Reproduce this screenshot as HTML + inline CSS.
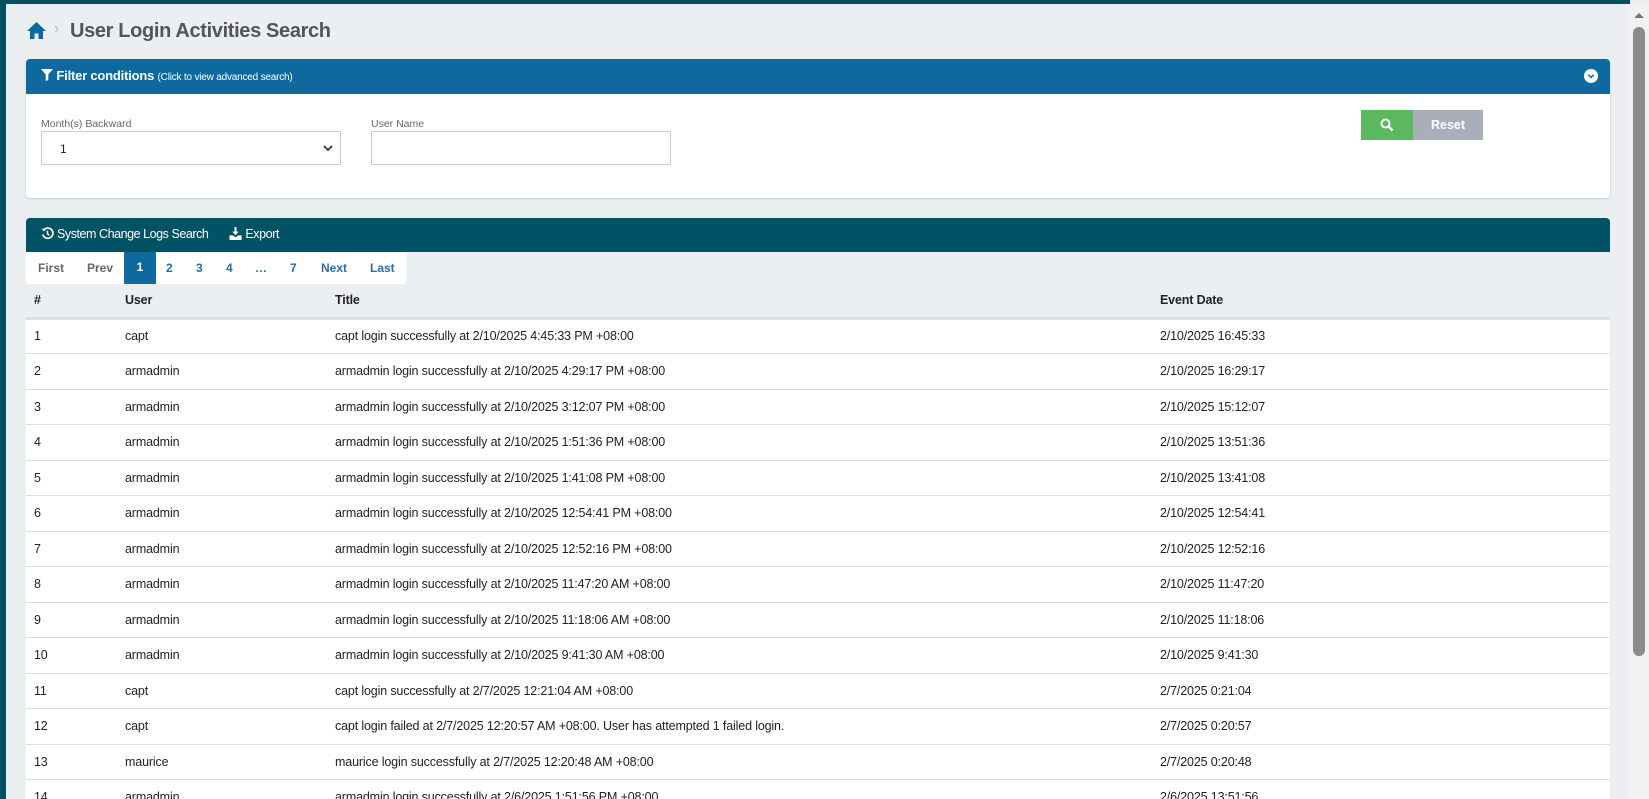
<!DOCTYPE html>
<html><head><meta charset="utf-8"><style>
*{box-sizing:border-box;margin:0;padding:0}
html,body{width:1649px;height:799px;overflow:hidden}
body{background:#eceff1;font-family:"Liberation Sans",sans-serif;font-size:12.5px;color:#222;position:relative}
.lb{position:absolute;left:0;top:0;width:6px;height:799px;background:#02505f}
.tb{position:absolute;left:0;top:0;width:1630px;height:4px;background:#02505f}
.sb{position:absolute;left:1630px;top:4px;width:19px;height:795px;background:#f1f1f1}
.thumb{position:absolute;left:1633px;top:27px;width:12px;height:629px;background:#8a8a8a;border-radius:6px}
.arr{position:absolute;left:1634px;top:13px;width:0;height:0;border-left:5px solid transparent;border-right:5px solid transparent;border-bottom:5px solid #777}
.title{position:absolute;left:70px;top:20px;font-size:20px;font-weight:bold;color:#555;letter-spacing:-0.35px}
.panel{position:absolute;left:26px;width:1584px;background:#fff;border-radius:4px;box-shadow:0 1px 2px rgba(0,0,0,.15)}
.fh{height:35px;background:#0e6a9e;border-radius:4px 4px 0 0;color:#fff;padding:9px 0 0 15px;font-weight:bold;font-size:13px;letter-spacing:-0.2px}
.fh small{font-weight:normal;font-size:10px}
.lbl{position:absolute;font-size:10.5px;color:#666;top:59px}
.inp{position:absolute;top:72px;height:34px;border:1px solid #ccc;background:#fff}
.dh{height:34px;background:#025266;border-radius:4px 4px 0 0;color:#fff;font-size:12.5px;padding:9px 0 0 15px;letter-spacing:-0.45px}
.pg{position:absolute;left:26px;top:252px;height:32px;width:380px;background:#fff;border-radius:0 0 4px 4px;font-weight:bold;font-size:12px}
.pg span{position:absolute;top:9px;color:#2a6fa8}
table{position:absolute;left:26px;top:284px;width:1584px;border-collapse:collapse;letter-spacing:-0.15px}
th{height:34px;text-align:left;font-size:12.5px;background:#eceff1;border-bottom:3px solid #dcdfe2}
td{height:35.5px;background:#fff;border-bottom:1px solid #ddd}
th,td{padding:0}
</style></head><body>
<div class="lb"></div><div class="tb"></div>
<div class="sb"></div><div class="arr"></div><div class="thumb"></div>
<svg style="position:absolute;left:26px;top:21px" width="21" height="19" viewBox="0 0 21 19"><path d="M10.5 1 L20 10 L17 10 L17 18 L12.5 18 L12.5 12.5 L8.5 12.5 L8.5 18 L4 18 L4 10 L1 10 Z" fill="#0e6a9e"/></svg>
<div style="position:absolute;left:54px;top:20px;color:#bbb;font-size:16px">›</div>
<div class="title">User Login Activities Search</div>

<div class="panel" style="top:59px;height:139px">
 <div class="fh"><svg width="12" height="12" viewBox="0 0 12 12" style="vertical-align:-1px"><path d="M0 0H12L7.3 5.5V11L4.7 12V5.5Z" fill="#fff"/></svg> Filter conditions <small>(Click to view advanced search)</small></div>
 <svg style="position:absolute;right:12px;top:10px" width="14" height="14" viewBox="0 0 14 14"><circle cx="7" cy="7" r="7" fill="#fff"/><path d="M4.3 5.8L7 8.4L9.7 5.8" stroke="#0e6a9e" stroke-width="1.5" fill="none"/></svg>
 <div class="lbl" style="left:15px">Month(s) Backward</div>
 <div class="inp" style="left:15px;width:300px"><span style="position:absolute;left:18px;top:10px;font-size:12px">1</span><svg style="position:absolute;right:7px;top:12px" width="10" height="8" viewBox="0 0 10 8"><path d="M1 2L5 6L9 2" stroke="#333" stroke-width="1.8" fill="none"/></svg></div>
 <div class="lbl" style="left:345px">User Name</div>
 <div class="inp" style="left:345px;width:300px"></div>
 <div style="position:absolute;left:1335px;top:51px;width:52px;height:30px;background:#5cb85c"><svg style="position:absolute;left:19px;top:8px" width="14" height="14" viewBox="0 0 14 14"><circle cx="5.5" cy="5.5" r="4" stroke="#fff" stroke-width="2" fill="none"/><path d="M8.5 8.5L12.5 12.5" stroke="#fff" stroke-width="2.4"/></svg></div>
 <div style="position:absolute;left:1387px;top:51px;width:70px;height:30px;background:#a8afb9;color:#fff;font-weight:bold;font-size:12.5px;text-align:center;line-height:30px">Reset</div>
</div>

<div class="panel" style="top:218px;height:34px;box-shadow:none">
 <div class="dh"><svg width="13" height="13" viewBox="0 0 14 14" style="vertical-align:-2px"><path d="M2.5 4A5.5 5.5 0 1 1 2 8" stroke="#fff" stroke-width="1.8" fill="none"/><path d="M0.5 1.5L3 4.5L6 2.5Z" fill="#fff"/><path d="M7 4V7.3L9 9" stroke="#fff" stroke-width="1.6" fill="none"/></svg> System Change Logs Search <span style="margin-left:18px"><svg width="13" height="13" viewBox="0 0 14 14" style="vertical-align:-2px"><path d="M7 0V7" stroke="#fff" stroke-width="2.2"/><path d="M3.5 5L7 8.7L10.5 5Z" fill="#fff"/><path d="M0.5 9H4L7 11L10 9H13.5V14H0.5Z" fill="#fff"/></svg> Export</span></div>
</div>
<div class="pg">
 <span style="left:12px;color:#666">First</span>
 <span style="left:61px;color:#666">Prev</span>
 <div style="position:absolute;left:98px;top:0;width:32px;height:32px;background:#0e6a9e;color:#fff;text-align:center;line-height:31px">1</div>
 <span style="left:140px">2</span><span style="left:170px">3</span><span style="left:200px">4</span><span style="left:229px">…</span><span style="left:264px">7</span><span style="left:295px">Next</span><span style="left:344px">Last</span>
</div>

<table>
<colgroup><col style="width:99px"><col style="width:210px"><col style="width:825px"><col></colgroup>
<tr><th style="padding-left:8px">#</th><th>User</th><th>Title</th><th>Event Date</th></tr>
<tr><td style="padding-left:8px">1</td><td>capt</td><td>capt login successfully at 2/10/2025 4:45:33 PM +08:00</td><td>2/10/2025 16:45:33</td></tr>
<tr><td style="padding-left:8px">2</td><td>armadmin</td><td>armadmin login successfully at 2/10/2025 4:29:17 PM +08:00</td><td>2/10/2025 16:29:17</td></tr>
<tr><td style="padding-left:8px">3</td><td>armadmin</td><td>armadmin login successfully at 2/10/2025 3:12:07 PM +08:00</td><td>2/10/2025 15:12:07</td></tr>
<tr><td style="padding-left:8px">4</td><td>armadmin</td><td>armadmin login successfully at 2/10/2025 1:51:36 PM +08:00</td><td>2/10/2025 13:51:36</td></tr>
<tr><td style="padding-left:8px">5</td><td>armadmin</td><td>armadmin login successfully at 2/10/2025 1:41:08 PM +08:00</td><td>2/10/2025 13:41:08</td></tr>
<tr><td style="padding-left:8px">6</td><td>armadmin</td><td>armadmin login successfully at 2/10/2025 12:54:41 PM +08:00</td><td>2/10/2025 12:54:41</td></tr>
<tr><td style="padding-left:8px">7</td><td>armadmin</td><td>armadmin login successfully at 2/10/2025 12:52:16 PM +08:00</td><td>2/10/2025 12:52:16</td></tr>
<tr><td style="padding-left:8px">8</td><td>armadmin</td><td>armadmin login successfully at 2/10/2025 11:47:20 AM +08:00</td><td>2/10/2025 11:47:20</td></tr>
<tr><td style="padding-left:8px">9</td><td>armadmin</td><td>armadmin login successfully at 2/10/2025 11:18:06 AM +08:00</td><td>2/10/2025 11:18:06</td></tr>
<tr><td style="padding-left:8px">10</td><td>armadmin</td><td>armadmin login successfully at 2/10/2025 9:41:30 AM +08:00</td><td>2/10/2025 9:41:30</td></tr>
<tr><td style="padding-left:8px">11</td><td>capt</td><td>capt login successfully at 2/7/2025 12:21:04 AM +08:00</td><td>2/7/2025 0:21:04</td></tr>
<tr><td style="padding-left:8px">12</td><td>capt</td><td>capt login failed at 2/7/2025 12:20:57 AM +08:00. User has attempted 1 failed login.</td><td>2/7/2025 0:20:57</td></tr>
<tr><td style="padding-left:8px">13</td><td>maurice</td><td>maurice login successfully at 2/7/2025 12:20:48 AM +08:00</td><td>2/7/2025 0:20:48</td></tr>
<tr><td style="padding-left:8px">14</td><td>armadmin</td><td>armadmin login successfully at 2/6/2025 1:51:56 PM +08:00</td><td>2/6/2025 13:51:56</td></tr>
</table>
</body></html>
